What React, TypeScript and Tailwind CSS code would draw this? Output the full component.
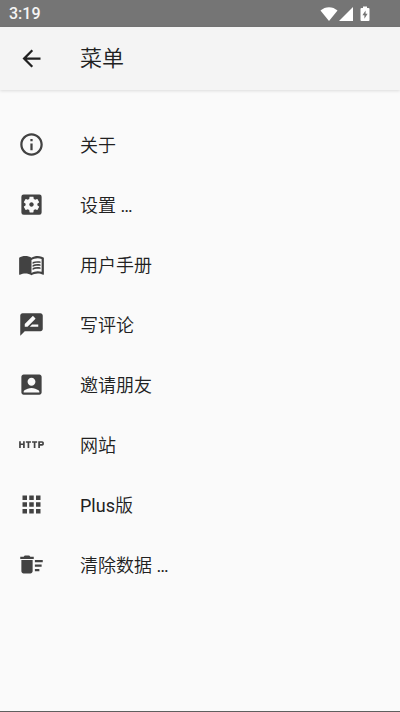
import React from 'react';
import {
    MdAccountBox,
    MdApps,
    MdArrowBack,
    MdDeleteSweep,
    MdHttp,
    MdInfoOutline,
    MdMenuBook,
    MdRateReview,
    MdSettingsApplications,
} from 'react-icons/md';
import type { IconType } from 'react-icons';

interface MenuItem {
    label: string;
    icon: IconType;
}

const items: MenuItem[] = [
    { label: '关于', icon: MdInfoOutline },
    { label: '设置 …', icon: MdSettingsApplications },
    { label: '用户手册', icon: MdMenuBook },
    { label: '写评论', icon: MdRateReview },
    { label: '邀请朋友', icon: MdAccountBox },
    { label: '网站', icon: MdHttp },
    { label: 'Plus版', icon: MdApps },
    { label: '清除数据 …', icon: MdDeleteSweep },
];

const StatusBar: React.FC = () => (
    <div className="h-[27px] shrink-0 flex items-center justify-between bg-[#757575] text-[#f5f5f5] pl-[9px] pr-[30px]">
        <span className="text-base leading-5 font-medium">3:19</span>
        <div className="flex items-center text-white">
            {/* Wifi */}
            <svg width="18" height="16" viewBox="0 0 18 16" fill="currentColor" aria-hidden="true">
                <path d="M9 15 .5 4.6C3 2.4 5.8 1.2 9 1.2s6 1.2 8.5 3.4z" />
            </svg>
            {/* Signal */}
            <svg width="14" height="16" viewBox="0 0 14 16" fill="currentColor" aria-hidden="true" className="ml-px">
                <path d="M0 15 14 1v14z" />
            </svg>
            {/* Battery */}
            <svg width="10" height="16" viewBox="0 0 10 16" aria-hidden="true" className="ml-[7px]">
                <path
                    fill="currentColor"
                    d="M3 .5h4V2h1.5q1 0 1 1v11q0 1-1 1h-7q-1 0-1-1V3q0-1 1-1H3z"
                />
                <path fill="#757575" d="M5.6 4.5 2.4 9.3h2v3.4l3.2-5h-2z" />
            </svg>
        </div>
    </div>
);

// Chinese runs use the lighter cut, Latin runs stay at regular weight
const Label: React.FC<{ text: string }> = ({ text }) => (
    <span className="pt-1 text-lg leading-7 font-[350]">
        {text.split(/([A-Za-z…]+)/).map((part, i) =>
            i % 2 === 1 ? (
                <span key={i} className="font-normal">
                    {part}
                </span>
            ) : (
                part
            )
        )}
    </span>
);

const App: React.FC = () => {
    return (
        <div className="min-h-screen w-full flex flex-col bg-[#fafafa] text-[#212121] border-b border-[#5f5f5f] font-['Roboto','Noto_Sans_CJK_SC',sans-serif]">
            <StatusBar />

            <header className="h-[63px] shrink-0 flex items-center bg-[#f4f4f4] px-[18px] shadow-[0_1px_3px_rgba(0,0,0,0.12)]">
                <button type="button" aria-label="返回" className="w-[62px] text-left">
                    <MdArrowBack size={27} />
                </button>
                <h1 className="text-[22px] leading-8 font-[350]">菜单</h1>
            </header>

            <nav className="flex-1 pt-6">
                <ul>
                    {items.map(({ label, icon: Icon }) => (
                        <li key={label}>
                            <button type="button" className="w-full h-[60px] flex items-center px-[18px] text-left">
                                <span className="w-[62px] text-[#424242]">
                                    <Icon size={27} />
                                </span>
                                <Label text={label} />
                            </button>
                        </li>
                    ))}
                </ul>
            </nav>
        </div>
    );
};

export default App;
